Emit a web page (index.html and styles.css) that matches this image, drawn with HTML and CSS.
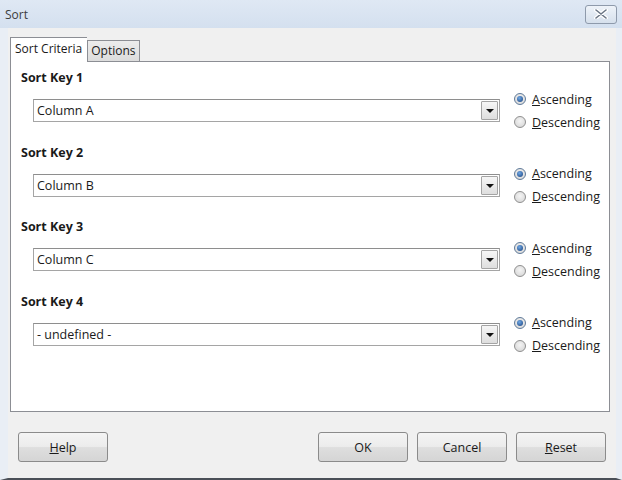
FILE: index.html
```html
<!DOCTYPE html>
<html lang="en">
<head>
  <meta charset="UTF-8">
  <title>Sort</title>
  <link rel="stylesheet" href="styles.css">
</head>
<body>

<div class="window">
  <div class="titlebar">
    <span class="title">Sort</span>
    <button class="close" aria-label="Close">
      <svg width="14" height="10" viewBox="0 0 14 10">
        <path d="M2 1 L12 9 M12 1 L2 9" stroke="#fff" stroke-width="4" stroke-linecap="round"/>
        <path d="M2 1 L12 9 M12 1 L2 9" stroke="#6b7685" stroke-width="1.6" stroke-linecap="round"/>
      </svg>
    </button>
  </div>

  <div class="body">
    <div class="tabs">
      <div class="tab active">Sort Criteria</div>
      <div class="tab">Options</div>
    </div>

    <div class="panel">
      <div class="key">
        <div class="key-label">Sort Key 1</div>
        <div class="key-row">
          <div class="combo"><span>Column A</span><span class="drop"></span></div>
          <div class="radios">
            <label class="radio checked"><span class="dot"></span><span><u>A</u>scending</span></label>
            <label class="radio"><span class="dot"></span><span><u>D</u>escending</span></label>
          </div>
        </div>
      </div>

      <div class="key">
        <div class="key-label">Sort Key 2</div>
        <div class="key-row">
          <div class="combo"><span>Column B</span><span class="drop"></span></div>
          <div class="radios">
            <label class="radio checked"><span class="dot"></span><span><u>A</u>scending</span></label>
            <label class="radio"><span class="dot"></span><span><u>D</u>escending</span></label>
          </div>
        </div>
      </div>

      <div class="key">
        <div class="key-label">Sort Key 3</div>
        <div class="key-row">
          <div class="combo"><span>Column C</span><span class="drop"></span></div>
          <div class="radios">
            <label class="radio checked"><span class="dot"></span><span><u>A</u>scending</span></label>
            <label class="radio"><span class="dot"></span><span><u>D</u>escending</span></label>
          </div>
        </div>
      </div>

      <div class="key">
        <div class="key-label">Sort Key 4</div>
        <div class="key-row">
          <div class="combo"><span>- undefined -</span><span class="drop"></span></div>
          <div class="radios">
            <label class="radio checked"><span class="dot"></span><span><u>A</u>scending</span></label>
            <label class="radio"><span class="dot"></span><span><u>D</u>escending</span></label>
          </div>
        </div>
      </div>
    </div>

    <div class="footer">
      <button class="btn"><u>H</u>elp</button>
      <div class="right">
        <button class="btn">OK</button>
        <button class="btn">Cancel</button>
        <button class="btn"><u>R</u>eset</button>
      </div>
    </div>
  </div>
</div>

</body>
</html>
```

FILE: styles.css
```css
* {
  box-sizing: border-box;
}

body {
  margin: 0;
  font-family: "Open Sans", Arial, sans-serif;
  font-size: 12.5px;
  color: #1a1a1a;
}

.window {
  width: 622px;
  height: 480px;
  background: #f0f0f0;
  border-left: 8px solid #e9eef5;
  border-right: 6px solid #e9eef5;
  border-bottom: 2px solid #4a4f57;
  display: flex;
  flex-direction: column;
}

.titlebar {
  height: 28px;
  margin: 0 -6px 0 -8px;
  background: linear-gradient(#dfe8f4, #d4e0ef);
  display: flex;
  align-items: center;
  justify-content: space-between;
  padding: 0 5px;
}

.title {
  color: #3c3c3c;
  font-size: 12px;
}

.close {
  width: 32px;
  height: 19px;
  border: 1px solid #8e9aab;
  border-radius: 3px;
  background: linear-gradient(#eef3f9, #d6e0ec);
  display: flex;
  align-items: center;
  justify-content: center;
  padding: 0;
}

.body {
  flex: 1;
  display: flex;
  flex-direction: column;
  padding: 9px 6px 0 2px;
}

.tabs {
  display: flex;
  align-items: flex-end;
  height: 24px;
  position: relative;
  z-index: 1;
}

.tab {
  border: 1px solid #8c8e94;
  border-bottom: none;
  background: linear-gradient(#ececec, #dcdcdc);
  padding: 0 3px;
  height: 21px;
  line-height: 20px;
  font-size: 12px;
}

.tab.active {
  background: #fff;
  line-height: 22px;
  border-right: none;
  margin-bottom: -1px;
  height: 25px;
  padding: 0 5px 0 4px;
}

.panel {
  height: 351px;
  background: #fff;
  border: 1px solid #8c8e94;
  padding: 7px 0 0 10px;
}

.key {
  height: 74.5px;
}

.key-label {
  font-weight: bold;
  line-height: 18px;
}

.key-row {
  display: flex;
  margin-top: 12px;
  padding-left: 12px;
}

.combo {
  width: 467px;
  height: 23px;
  border: 1px solid #a5a5a5;
  border-top-color: #8e8e8e;
  display: flex;
  align-items: center;
  justify-content: space-between;
  padding: 0 1px 0 3px;
}

.drop {
  width: 17px;
  height: 19px;
  border: 1px solid #a4a4a4;
  border-radius: 1px;
  background: linear-gradient(#f6f6f6, #dedede);
  position: relative;
}

.drop::after {
  content: "";
  position: absolute;
  left: 4px;
  top: 7px;
  border-left: 4px solid transparent;
  border-right: 4px solid transparent;
  border-top: 4px solid #111;
}

.radios {
  display: flex;
  flex-direction: column;
  gap: 5px;
  margin-left: 14px;
  margin-top: -9px;
}

.radio {
  display: flex;
  align-items: center;
  gap: 6px;
  height: 18px;
}

.dot {
  width: 12px;
  height: 12px;
  border-radius: 50%;
  border: 1px solid #8f8f8f;
  background: radial-gradient(circle at 50% 40%, #f4f4f4, #d3d3d3);
  position: relative;
}

.radio.checked .dot {
  border-color: #5f7a99;
}

.radio.checked .dot::after {
  content: "";
  position: absolute;
  left: 2px;
  top: 2px;
  width: 6px;
  height: 6px;
  border-radius: 50%;
  background: radial-gradient(circle at 40% 35%, #6fa8e6, #173f7a);
}

.footer {
  display: flex;
  justify-content: space-between;
  padding: 20px 4px 0 8px;
}

.right {
  display: flex;
  gap: 9px;
}

.btn {
  width: 90px;
  height: 30px;
  border: 1px solid #8b8b8b;
  border-radius: 3px;
  background: linear-gradient(#f4f4f4 0%, #ececec 48%, #dedede 52%, #d5d5d5 100%);
  font-family: "Open Sans", Arial, sans-serif;
  font-size: 12.5px;
  color: #1a1a1a;
  padding: 0;
}
```
